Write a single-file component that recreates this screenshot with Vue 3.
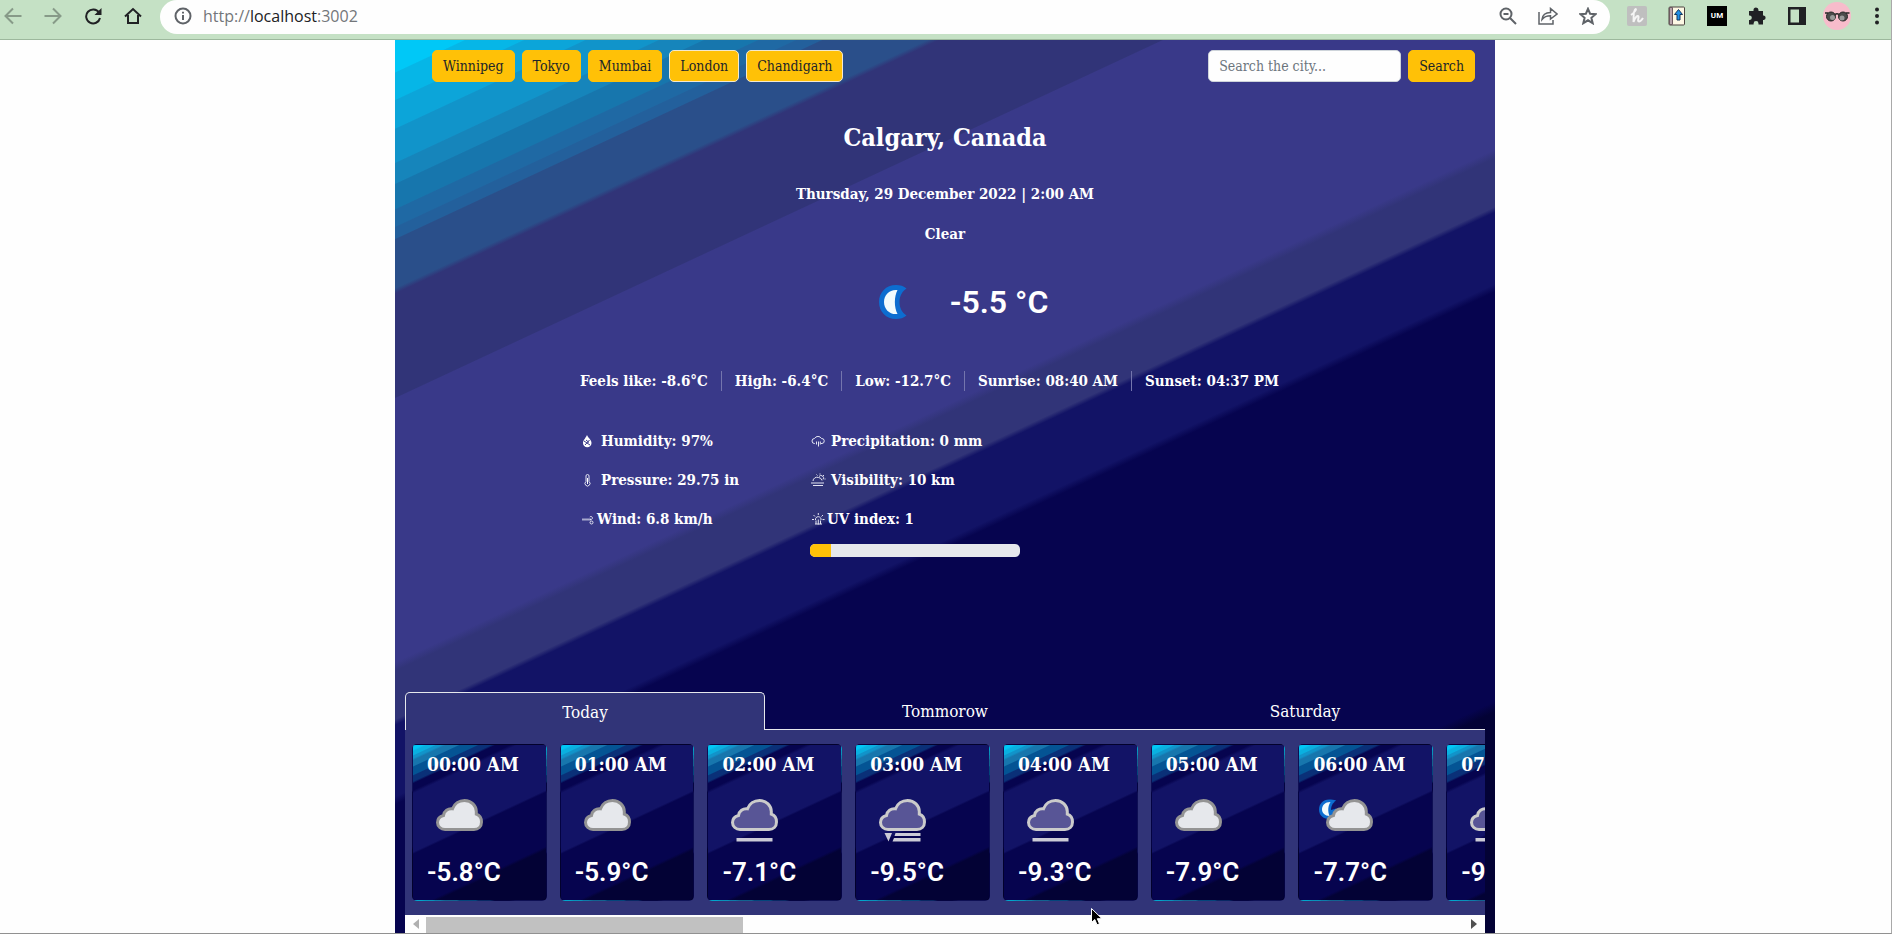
<script setup>
import { ref } from 'vue'

const cities = [
  { name: 'Winnipeg' },
  { name: 'Tokyo' },
  { name: 'Mumbai' },
  { name: 'London', outlined: true },
  { name: 'Chandigarh', outlined: true }
]

const query = ref('')
const uvPercent = 10

const summary = [
  'Feels like: -8.6°C',
  'High: -6.4°C',
  'Low: -12.7°C',
  'Sunrise: 08:40 AM',
  'Sunset: 04:37 PM'
]

const tabs = ['Today', 'Tommorow', 'Saturday']
const activeTab = ref('Today')

const hours = [
  { time: '00:00 AM', temp: '-5.8°C', icon: 'cloud' },
  { time: '01:00 AM', temp: '-5.9°C', icon: 'cloud' },
  { time: '02:00 AM', temp: '-7.1°C', icon: 'fog' },
  { time: '03:00 AM', temp: '-9.5°C', icon: 'freezing' },
  { time: '04:00 AM', temp: '-9.3°C', icon: 'fog' },
  { time: '05:00 AM', temp: '-7.9°C', icon: 'cloud' },
  { time: '06:00 AM', temp: '-7.7°C', icon: 'night' },
  { time: '07:00 AM', temp: '-9.1°C', icon: 'fog' }
]

const cloudPath =
  'M9 30.5C5 30.5 1.5 27.5 1.5 23.5C1.5 19.8 4.2 17.4 7.5 16.5C8 12 12 9.2 16.5 9.8C18.3 4.8 23 1.5 28.5 1.5C35.5 1.5 40.3 6.8 40.3 12.6V15.2C43.6 16.3 45.5 19.4 45.5 23C45.5 27.5 42.3 30.5 38 30.5Z'
</script>

<template>
  <div class="browser">
    <header class="toolbar">
      <nav class="nav" aria-label="Browser">
        <button type="button" class="tool faded" aria-label="Back">
          <svg width="18" height="18" viewBox="0 0 18 18"><path d="M17.5 9H2M9 1.5L1.5 9L9 16.5" /></svg>
        </button>
        <button type="button" class="tool faded" aria-label="Forward">
          <svg width="18" height="18" viewBox="0 0 18 18"><path d="M.5 9H16M9 1.5L16.5 9L9 16.5" /></svg>
        </button>
        <button type="button" class="tool" aria-label="Reload">
          <svg width="18" height="18" viewBox="0 0 18 18"><path d="M15 5.5A7 7 0 1 0 16 11" /><path class="solid" d="M17.5 1V8H10.5Z" /></svg>
        </button>
        <button type="button" class="tool" aria-label="Home">
          <svg width="18" height="18" viewBox="0 0 18 18"><path d="M1 9.5L9 2L17 9.5M4 8V16H14V8" /></svg>
        </button>
      </nav>
      <div class="address">
        <svg class="info" width="18" height="18" viewBox="0 0 18 18"><circle cx="9" cy="9" r="7.5" /><path d="M9 8V13M9 4.8V6.6" /></svg>
        <span class="url">http://<b>localhost</b>:3002</span>
        <div class="actions">
          <button type="button" class="tool grey" aria-label="Zoom">
            <svg width="18" height="18" viewBox="0 0 18 18"><circle cx="7" cy="7" r="5.5" /><path d="M4.5 7H9.5M11 11L17 17" /></svg>
          </button>
          <button type="button" class="tool grey" aria-label="Share">
            <svg width="20" height="18" viewBox="0 0 20 18"><path class="thin" d="M1 5V17H15V13M4 12.5C4.5 8 8 5.5 12.5 5.5V1.5L19 7L12.5 12V8.8C9 8.8 6 10 4 12.5Z" /></svg>
          </button>
          <button type="button" class="tool grey" aria-label="Bookmark">
            <svg width="18" height="18" viewBox="0 0 18 18"><path d="M9 1.8L11.1 6.7L16.6 7.2L12.4 10.8L13.7 16.2L9 13.3L4.3 16.2L5.6 10.8L1.4 7.2L6.9 6.7Z" /></svg>
          </button>
        </div>
      </div>
      <div class="extensions">
        <button type="button" class="tool" aria-label="Shopping extension">
          <svg width="20" height="20" viewBox="0 0 20 20"><rect class="honey" width="20" height="20" rx="2" /><path class="swirl" d="M4 9C7 7 10 3 8.500 3C7 3 6.500 10 6.500 16C8 11 11 9 11.500 10.500C12 12 10 15.500 12 15.500C13.500 15.500 15 13.500 16 12" /></svg>
        </button>
        <button type="button" class="tool" aria-label="Notebook extension">
          <svg width="18" height="20" viewBox="0 0 18 20"><rect class="book" x="1" y="1" width="15.5" height="18" rx="1" /><path class="spine" d="M1.5 1.5H4.5V18.5H1.5Z" /><path class="up" d="M10.5 3.5L14.5 8.5H12V14H9V8.5H6.5Z" /></svg>
        </button>
        <button type="button" class="tool" aria-label="UM extension"><span class="um">UM</span></button>
        <button type="button" class="tool" aria-label="Extensions">
          <svg width="20" height="20" viewBox="0 0 20 20"><path class="solid" d="M2 5H6.500V4A2.500 2.500 0 0 1 11.500 4V5H16V9.500H16.800A2.300 2.300 0 0 1 16.800 14H16V18.500H11.500V17.500A2.400 2.400 0 0 0 6.600 17.500V18.500H2V14H3A2.300 2.300 0 0 0 3 9.500H2Z" /></svg>
        </button>
        <button type="button" class="tool" aria-label="Side panel">
          <svg width="18" height="18" viewBox="0 0 18 18"><path class="solid" fill-rule="evenodd" d="M0 0H18V18H0ZM2.5 2.5V15.5H11V2.5Z" /></svg>
        </button>
        <button type="button" class="tool" aria-label="Profile">
          <svg width="28" height="28" viewBox="0 0 28 28">
            <circle class="avatar" cx="14" cy="14" r="14" />
            <circle class="lens" cx="8" cy="14.5" r="4.5" /><circle class="lens" cx="20" cy="14.5" r="4.5" />
            <circle class="shine" cx="9.5" cy="15.5" r="2.5" /><circle class="shine" cx="19" cy="16" r="2.5" />
            <path class="frame" d="M2 11H5M23 11H26.5M12 12.5Q14 11 16 12.5" />
          </svg>
        </button>
        <button type="button" class="tool" aria-label="Menu">
          <svg width="6" height="18" viewBox="0 0 6 18"><circle class="solid" cx="3" cy="2.5" r="2" /><circle class="solid" cx="3" cy="9" r="2" /><circle class="solid" cx="3" cy="15.5" r="2" /></svg>
        </button>
      </div>
    </header>

    <div class="page">
      <main class="app">
        <div class="topbar">
          <div class="cities">
            <button v-for="c in cities" :key="c.name" type="button" class="btn" :class="{ outlined: c.outlined }">{{ c.name }}</button>
          </div>
          <form class="search" @submit.prevent>
            <input v-model="query" type="text" aria-label="City" placeholder="Search the city..." />
            <button type="submit" class="btn">Search</button>
          </form>
        </div>

        <section class="current">
          <h1>Calgary, Canada</h1>
          <p class="date">Thursday, 29 December 2022 | 2:00 AM</p>
          <p class="condition">Clear</p>
          <div class="now">
            <svg width="30" height="36" viewBox="0 0 30 36">
              <path class="moon-edge" d="M18 1C8 1 1 8.5 1 18C1 27.5 8 35 18 35C22 35 26 34 28.5 31.5C24 28.5 21.5 24 21.5 18C21.5 12 24 7.5 28.5 4.5C26 2 22 1 18 1Z" />
              <path class="moon" d="M19.5 6C12 5 6 10.5 6 18C6 25.5 12 31 19.5 30C16 23 16 13 19.5 6Z" />
            </svg>
            <span>-5.5 °C</span>
          </div>
        </section>

        <ul class="summary">
          <li v-for="s in summary" :key="s">{{ s }}</li>
        </ul>

        <div class="details">
          <ul>
            <li>
              <svg width="16" height="16" viewBox="0 0 16 16"><path class="fill" d="M7 2C8 5 11.500 6.500 11.500 10A4 4 0 0 1 3 10C3 7.500 5 6 7 2Z" /><path class="cut" d="M4 8L10 12M6 7L9 9.500M9.500 7L5 12" /></svg>
              <span>Humidity: 97%</span>
            </li>
            <li>
              <svg width="16" height="16" viewBox="0 0 16 16"><path d="M6 9.500V4A1.500 1.500 0 0 1 9 4V9.500A2.500 2.500 0 1 1 6 9.500Z" /><path class="bulb" d="M7.500 6V12" /></svg>
              <span>Pressure: 29.75 in</span>
            </li>
            <li class="tight">
              <svg width="16" height="16" viewBox="0 0 16 16"><path class="breeze" d="M2 8.500H11" /><path d="M10 8.500H11A1.500 1.500 0 1 0 9.800 6" /><circle cx="11.500" cy="11.500" r="1.500" /></svg>
              <span>Wind: 6.8 km/h</span>
            </li>
          </ul>
          <ul>
            <li>
              <svg width="16" height="16" viewBox="0 0 16 16"><path d="M5 10.500H4.500A2.500 2.500 0 0 1 4.500 5.500A4 4 0 0 1 11.500 5.500A2.500 2.500 0 0 1 12 10.500H11M6.500 8.500V11.500M8.500 8.500V13.500M10.300 8.500V11.500" /></svg>
              <span>Precipitation: 0 mm</span>
            </li>
            <li>
              <svg width="16" height="16" viewBox="0 0 16 16"><path d="M1 11H14M3 13.500H13M3 9A4 4 0 0 1 8.500 5.500A4 4 0 0 1 12 8.500M9 4.500A2.500 2.500 0 0 1 13 7.500M10 1.500V2.500M14 3L13 4M14.500 7H15.500M6.500 2.500L7.500 3.500" /></svg>
              <span>Visibility: 10 km</span>
            </li>
            <li class="tight">
              <svg width="16" height="16" viewBox="0 0 16 16"><path d="M5.500 9A2.800 2.800 0 1 1 11 9M8.300 2V4M3.500 4L5 5.500M13 4L11.500 5.500M2 8.500H4M12.500 8.500H14.500M6 9.500V13M8.300 8.500V13.500M10.500 9.500V13M5 13H12" /></svg>
              <span>UV index: 1</span>
            </li>
            <li class="meter" role="progressbar" aria-label="UV index" :aria-valuenow="uvPercent">
              <span class="meter-fill" :style="{ width: uvPercent + '%' }"></span>
            </li>
          </ul>
        </div>

        <section class="forecast">
          <div class="tabs" role="tablist">
            <button
              v-for="t in tabs" :key="t" type="button" role="tab" class="tab"
              :class="{ active: t === activeTab }" :aria-selected="t === activeTab" @click="activeTab = t"
            >{{ t }}</button>
          </div>
          <div class="hours">
            <article v-for="h in hours" :key="h.time" class="card">
              <h2>{{ h.time }}</h2>
              <svg class="weather" width="56" height="44" viewBox="0 0 56 44">
                <template v-if="h.icon === 'night'">
                  <path class="moon-edge" d="M11 .5C5 .5 1 5 1 10.5C1 16 5 20 11 20L18 18V1.5C16 .5 13.5 .5 11 .5Z" />
                  <path class="moon" d="M12.5 3C7 3 4 6.5 4 10.5C4 14 7 17 11.500 17C9.5 12 10 6.5 12.5 3Z" />
                  <path class="night-gap" d="M18.5 1.2C14.5 4 13 7 13 11L20 9Z" />
                </template>
                <g :transform="h.icon === 'night' ? 'translate(8 0)' : 'translate(4 0)'">
                  <path :class="h.icon === 'cloud' || h.icon === 'night' ? 'cloud' : 'cloud dim'" :d="cloudPath" />
                  <path v-if="h.icon === 'fog'" class="streak" d="M5.5 39H41.5V42.5H5.5Z" />
                  <path v-if="h.icon === 'freezing'" class="streak" d="M5.5 34H13L9.5 42.5ZM16.5 34H41.5V37H15.5ZM15 39H41.5V42.5H13.5Z" />
                </g>
              </svg>
              <p>{{ h.temp }}</p>
            </article>
          </div>
          <div class="scrollbar" aria-hidden="true">
            <svg width="6" height="10" viewBox="0 0 6 10"><path class="off" d="M6 0V10L0 5Z" /></svg>
            <div class="track"><div class="thumb"></div></div>
            <svg width="6" height="10" viewBox="0 0 6 10"><path d="M0 0V10L6 5Z" /></svg>
          </div>
          <svg class="pointer" width="12" height="18" viewBox="0 0 12 18"><path d="M.5 .5V14.5L3.8 11.5L6 16.8L8.5 15.8L6.3 10.7H11Z" /></svg>
        </section>
      </main>
    </div>
  </div>
</template>

<style>
body {
  margin: 0;
  background: #fefefe;
}
</style>

<style scoped>
* {
  box-sizing: border-box;
}
.browser {
  display: flex;
  flex-direction: column;
  min-height: 100vh;
  border-right: 1px solid #a9a9a9;
  border-bottom: 1px solid #919191;
  font-family: 'Roboto Slab', 'DejaVu Serif Condensed', 'DejaVu Serif', serif;
}
button {
  font: inherit;
  cursor: pointer;
}
h1, h2, p, ul {
  margin: 0;
  padding: 0;
}
ul {
  list-style: none;
}

/* Browser toolbar */
.toolbar {
  display: flex;
  align-items: flex-start;
  height: 40px;
  background: #c5e1c5;
  border-bottom: 1px solid #9db89d;
}
.nav {
  display: flex;
  gap: 16px;
  padding: 0 15px 0 1px;
}
.tool {
  display: grid;
  place-items: center;
  width: 28px;
  height: 32px;
  padding: 0;
  border: 0;
  background: none;
}
.nav .tool {
  width: 24px;
}
.tool path, .tool circle, .info path, .info circle {
  fill: none;
  stroke: #202124;
  stroke-width: 2;
}
.faded path {
  stroke: #879a88;
}
.grey path, .grey circle, .info path, .info circle {
  stroke: #5f6368;
}
.tool .thin {
  stroke-width: 1.5;
}
.tool .solid {
  fill: #202124;
  stroke: none;
}
.address {
  display: flex;
  flex: 1;
  align-items: center;
  height: 34px;
  margin-right: 13px;
  padding: 0 8px 2px 14px;
  border-radius: 17px;
  background: #fefefe;
}
.url {
  margin-left: 11px;
  font: 16px/24px 'Open Sans', 'Noto Sans', sans-serif;
  color: #73767a;
}
.url b {
  font-weight: 400;
  color: #202124;
}
.actions, .extensions {
  display: flex;
  gap: 12px;
}
.actions {
  margin-left: auto;
}
.honey {
  fill: #bfbfbf;
}
.tool .swirl {
  stroke: #f5f5f5;
}
.book {
  fill: #fdf8e4;
  stroke: #4c4340;
}
.tool .spine {
  fill: #b7a4ab;
  stroke: #6d5a60;
  stroke-width: 1;
}
.tool .up {
  fill: #1f8fe8;
  stroke: #15375c;
  stroke-width: 1;
}
.um {
  width: 20px;
  background: #000;
  color: #fff;
  font: 700 8px/20px Roboto, sans-serif;
  text-align: center;
}
.tool .avatar {
  fill: #f7bccb;
  stroke: none;
}
.tool .lens {
  fill: #4b4b4b;
  stroke: #262626;
  stroke-width: 1;
}
.tool .shine {
  fill: #9a9a9a;
  stroke: none;
}
.tool .frame {
  stroke: #262626;
  stroke-width: 1.5;
}

/* Weather panel */
.page {
  display: flex;
  flex: 1;
  justify-content: center;
  padding-right: 1px;
}
.app {
  display: flex;
  flex: 0 1 1100px;
  flex-direction: column;
  min-width: 0;
  color: #fff;
  background: linear-gradient(
    155deg,
    #00c8f7 29px, #06b6e7 30px, #06b6e7 54px, #0ca5d9 55px, #0ca5d9 80px, #1194ca 81px,
    #1194ca 111px, #1685bb 112px, #1685bb 130px, #1776ad 131px, #1776ad 153px, #1f69a4 154px,
    #1f69a4 169px, #23609c 170px, #23609c 180px, #2a4f8a 181px, #2a4f8a 225px, #313478 230px,
    #313478 324px, #393989 325px, #393989 564px, #313478 572px, #313478 616px, #121366 621px,
    #121366 686px, #06044f 693px, #06044f 1064px, #030235 1074px
  );
}
.topbar {
  display: flex;
  justify-content: space-between;
  padding: 10px 20px 0 37px;
}
.cities, .search {
  display: flex;
  gap: 7px;
}
.btn {
  height: 32px;
  padding: 0 10px;
  border: 1px solid #ffc107;
  border-radius: 5px;
  background: #ffc107;
  color: #212529;
  font-size: 14px;
  line-height: 20px;
}
.outlined {
  border-color: #f3e9d0;
}
.search input {
  width: 193px;
  height: 32px;
  padding: 0 10px;
  border: 1px solid #ced4da;
  border-radius: 5px;
  background: #fefefe;
  font: inherit;
  font-size: 14px;
}
.search input::placeholder {
  color: #6c757d;
  opacity: 1;
}
.current {
  display: flex;
  flex-direction: column;
  align-items: center;
}
h1 {
  margin-top: 40px;
  font-size: 25px;
  line-height: 32px;
}
.date, .condition, .summary, .details {
  font-size: 15px;
  font-weight: 700;
}
.date {
  margin-top: 28px;
  line-height: 24px;
}
.condition {
  margin-top: 16px;
  line-height: 24px;
}
.now {
  display: flex;
  align-items: center;
  gap: 42px;
  margin-top: 36px;
  padding-left: 36px;
  font: 600 32px/40px Roboto, sans-serif;
}
.moon-edge {
  fill: #0d6dd0;
}
.moon {
  fill: #f2fbfd;
}
.night-gap {
  fill: #121366;
}
.summary {
  display: flex;
  margin: 49px 0 0 185px;
  line-height: 20px;
}
.summary li + li {
  margin-left: 13px;
  padding-left: 13px;
  border-left: 1px solid #7475ad;
}
.details {
  display: grid;
  grid-template-columns: 210px 210px;
  gap: 20px;
  margin: 40px 0 24px 185px;
  line-height: 20px;
}
.details ul {
  display: flex;
  flex-direction: column;
  gap: 19px;
}
.details li {
  display: flex;
  align-items: center;
  gap: 5px;
}
.details .tight {
  gap: 1px;
}
.details svg {
  fill: none;
  stroke: #e4e5f2;
  stroke-width: 1;
}
.details .fill {
  fill: #fff;
  stroke: none;
}
.details .cut {
  stroke: #393989;
}
.details .bulb {
  stroke: #fff;
}
.details .breeze {
  stroke: #a9aacd;
  stroke-width: 2;
}
.details .meter {
  height: 13px;
  margin-top: -4px;
  border-radius: 5px;
  overflow: hidden;
  background: #e6e8ec;
}
.meter-fill {
  height: 100%;
  background: #ffc107;
}

/* Hourly forecast */
.forecast {
  position: relative;
  margin: auto 10px 0;
}
.tabs {
  display: grid;
  grid-template-columns: repeat(3, 1fr);
  border-bottom: 1px solid #e6e8ec;
}
.tab {
  height: 37px;
  padding: 0;
  border: 1px solid transparent;
  border-bottom: 0;
  border-radius: 5px 5px 0 0;
  background: none;
  color: #fff;
  font-size: 17px;
}
.tab.active {
  height: 38px;
  margin-bottom: -1px;
  border-color: #e6e8ec;
  background: #313478;
}
.hours {
  display: grid;
  grid-auto-flow: column;
  grid-auto-columns: 12.64%;
  gap: 13px;
  padding: 14px 7px;
  overflow: hidden;
  background: #313478;
}
.card {
  display: flex;
  flex-direction: column;
  align-items: flex-start;
  padding: 7px 0 12px 14px;
  border: 1px solid rgba(0, 0, 0, 0.17);
  border-radius: 5px;
  white-space: nowrap;
  background: linear-gradient(
    155deg,
    #00c8f7 4px, #0ab0e0 6px, #0ab0e0 9px, #1194ca 10px, #1194ca 12px, #1776ad 14px, #1776ad 19px,
    #045494 20px, #045494 27px, #0a3078 28px, #0a3078 33px, #06044f 35px, #06044f 41px,
    #121366 44px, #121366 97px, #06044f 99px, #06044f 148px, #030235 151px
  );
}
.card h2 {
  font-size: 19px;
  line-height: 24px;
}
.weather {
  margin: 23px 0 13px 5px;
}
.cloud {
  fill: #e6e8ec;
  stroke: #949494;
  stroke-width: 3;
}
.dim {
  fill: #585596;
  stroke: #cbcbcb;
}
.streak {
  fill: #cbcbd6;
}
.card p {
  font: 600 26px/32px Roboto, sans-serif;
}
.scrollbar {
  display: flex;
  align-items: center;
  height: 18px;
  padding: 0 8px;
  background: #fefefe;
  fill: #505050;
}
.off {
  fill: #b0b0b0;
}
.track {
  flex: 1;
  height: 16px;
  margin: 2px 7px 0;
}
.thumb {
  width: 30.5%;
  height: 16px;
  background: #c1c1c1;
}
.pointer {
  position: absolute;
  left: 686px;
  bottom: 7px;
  fill: #000;
  stroke: #fff;
  stroke-width: 1;
}
</style>
